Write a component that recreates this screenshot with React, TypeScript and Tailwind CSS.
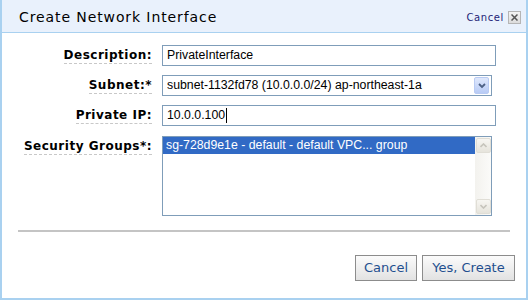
import React from 'react';

const labelCls =
  "justify-self-end font-bold text-[12px] tracking-[0.5px] text-black leading-[14px] border-b border-dashed border-[#c8c8c8] pb-[1px] [font-family:'DejaVu_Sans',sans-serif]";

const fieldFont = "[font-family:'Liberation_Sans',Arial,sans-serif] text-[12.3px] text-black";

const ScrollArrow: React.FC<{ up?: boolean }> = ({ up }) => (
  <div className="w-[15px] h-[15px] rounded-[2px] border border-[#e0ded6] bg-gradient-to-b from-[#f7f6f2] to-[#e6e4dc] flex items-center justify-center">
    <svg width="7" height="5" viewBox="0 0 7 5">
      <path d={up ? 'M0.5 4 L3.5 1 L6.5 4' : 'M0.5 1 L3.5 4 L6.5 1'} fill="none" stroke="#c6c4bc" strokeWidth="1.6" />
    </svg>
  </div>
);

export default function App() {
  return (
    <div className="w-[530px] h-[300px] bg-white">
      <div className="w-[528px] h-[300px] border-2 border-t-0 border-[#a9d1f0] bg-white flex flex-col">
        <div className="h-[33px] bg-[#e9f1fc] border-b border-[#a9d1f0] flex items-center justify-between pl-[17px] pr-[5px]">
          <span className="text-[14px] text-black [font-family:'DejaVu_Sans',Verdana,sans-serif] tracking-[0.9px] mt-[2px]">
            Create Network Interface
          </span>
          <div className="flex items-center gap-[4px] mt-[3px]">
            <span className="text-[10px] text-[#1e1e78] tracking-[0.6px] [font-family:'DejaVu_Sans',Verdana,sans-serif]">Cancel</span>
            <div className="w-[13px] h-[13px] border border-[#b5b5b5] bg-gradient-to-b from-[#f4f4f4] to-[#dcdcdc] flex items-center justify-center">
              <svg width="7" height="7" viewBox="0 0 7 7">
                <path d="M0.5 0.5 L6.5 6.5 M6.5 0.5 L0.5 6.5" stroke="#555" strokeWidth="1.5" />
              </svg>
            </div>
          </div>
        </div>

        <div className="grid grid-cols-[150px_1fr] gap-x-[10px] items-center pt-[12px] pr-[30px]">
          <span className={labelCls}>Description:</span>
          <div className={`h-[21px] border border-[#7f9db9] flex items-center pl-[4px] ${fieldFont}`}>PrivateInterface</div>

          <span className={`${labelCls} mt-[9px]`}>Subnet:*</span>
          <div className={`mt-[9px] mr-[4px] h-[21px] border border-[#7f9db9] flex items-center justify-between pl-[4px] pr-[2px] ${fieldFont}`}>
            <span>subnet-1132fd78 (10.0.0.0/24) ap-northeast-1a</span>
            <div className="w-[15px] h-[17px] rounded-[2px] border border-[#b9cbf3] bg-gradient-to-b from-[#dfe8fc] to-[#b8cbf5] flex items-center justify-center">
              <svg width="8" height="6" viewBox="0 0 8 6">
                <path d="M1 1 L4 4 L7 1" fill="none" stroke="#4d6185" strokeWidth="1.8" />
              </svg>
            </div>
          </div>

          <span className={`${labelCls} mt-[9px]`}>Private IP:</span>
          <div className={`mt-[9px] h-[21px] border border-[#7f9db9] flex items-center pl-[4px] ${fieldFont}`}>
            10.0.0.100<span className="inline-block w-[1px] h-[15px] bg-black ml-[1px]" />
          </div>

          <span className={`${labelCls} self-start mt-[13px]`}>Security Groups*:</span>
          <div className={`mt-[10px] mr-[4px] h-[80px] border border-[#7f9db9] flex ${fieldFont}`}>
            <div className="flex-1">
              <div className="h-[17px] bg-[#316ac5] text-white flex items-center pl-[3px]">
                sg-728d9e1e - default - default VPC... group
              </div>
            </div>
            <div className="w-[16px] bg-gradient-to-r from-[#f3f2ee] to-[#fbfbf9] flex flex-col justify-between items-center py-[1px]">
              <ScrollArrow up />
              <ScrollArrow />
            </div>
          </div>
        </div>

        <div className="mt-[14px] mx-[16px] h-[2px] bg-[#c4c4c4]" />

        <div className="flex justify-end gap-[5px] pr-[11px] mt-[23px]">
          <button className="h-[26px] w-[62px] border border-[#8c8c8c] bg-gradient-to-b from-[#fbfbfb] to-[#e2e2e2] text-[13px] text-[#1f4f8f] [font-family:'DejaVu_Sans',Verdana,sans-serif]">
            Cancel
          </button>
          <button className="h-[26px] w-[93px] border border-[#8c8c8c] bg-gradient-to-b from-[#fbfbfb] to-[#e2e2e2] text-[13px] text-[#1f4f8f] [font-family:'DejaVu_Sans',Verdana,sans-serif]">
            Yes, Create
          </button>
        </div>
      </div>
    </div>
  );
}
